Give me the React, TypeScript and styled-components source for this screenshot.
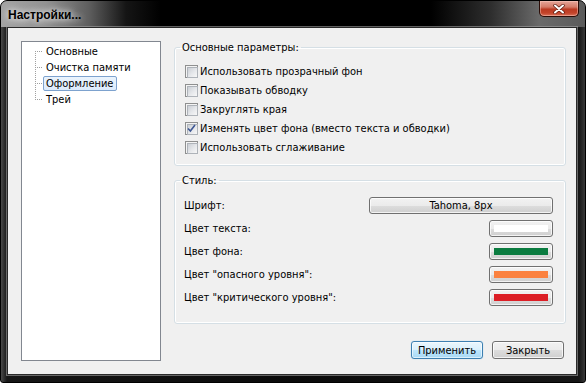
import React from "react";
import styled, { createGlobalStyle, css } from "styled-components";

const GlobalStyle = createGlobalStyle`
  html, body { margin: 0; padding: 0; background: #ffffff; }
  body {
    font-family: "DejaVu Sans Condensed", "DejaVu Sans", sans-serif;
    font-size: 11px;
    color: #000;
  }
  * { box-sizing: border-box; }
`;

const Window = styled.div`
  width: 586px;
  height: 383px;
  display: flex;
  flex-direction: column;
  border: 1px solid #000;
  border-radius: 7px 7px 3px 3px;
  overflow: hidden;
  background: linear-gradient(90deg, #4a4a4a 0px, #161616 6px, #0a0a0a 50%, #161616 578px, #444 586px);
`;

const TitleBar = styled.div`
  height: 26px;
  flex: none;
  display: flex;
  align-items: flex-start;
  padding-left: 7px;
  background:
    linear-gradient(90deg, #a4a4a4 0px, #929292 45px, #5e5e5e 88px, #151515 125px, #000 160px, #000 430px, #2e2e2e 490px, #6a6a6a 538px, #5a5a5a 586px);
`;

const Title = styled.div`
  margin-top: 7px;
  font-family: "Liberation Sans", Arial, sans-serif;
  font-weight: bold;
  font-size: 12px;
  line-height: 14px;
  color: #000;
  text-shadow: 0 0 6px rgba(255, 255, 255, 0.9), 0 0 10px rgba(255, 255, 255, 0.6);
`;

const CloseButton = styled.div`
  margin-left: auto;
  margin-right: 6px;
  width: 40px;
  height: 16px;
  border: 1px solid #2b0c06;
  border-top: none;
  border-radius: 0 0 5px 5px;
  display: flex;
  align-items: center;
  justify-content: center;
  background: linear-gradient(180deg, #e6a69a 0%, #d47b68 40%, #bb3a22 55%, #c4442a 80%, #d8715a 100%);
  box-shadow: inset 0 0 0 1px rgba(255, 210, 200, 0.45);
`;

const Client = styled.div`
  flex: 1;
  margin: 0 8px 7px 6px;
  border: 1px solid #2a2a2a;
  box-shadow: 0 0 0 1px rgba(160, 160, 160, 0.6);
  background: #f0f0f0;
  padding: 13px 10px 13px 13px;
  display: flex;
  gap: 13px;
`;

const Tree = styled.div`
  width: 140px;
  flex: none;
  background: #fff;
  border: 1px solid #828790;
  padding: 1px 0 0 0;
  display: flex;
  flex-direction: column;
`;

const TreeRow = styled.div`
  height: 16px;
  display: flex;
  align-items: center;
  padding-left: 13px;
`;

const TreeLabel = styled.span<{ $selected?: boolean }>`
  height: 15px;
  line-height: 13px;
  padding: 0 3px 0 2px;
  border: 1px solid transparent;
  border-radius: 2px;
  white-space: nowrap;
  ${(p) =>
    p.$selected &&
    css`
      border-color: #7da2ce;
      background: linear-gradient(180deg, #ebf4fd 0%, #dcebfc 100%);
    `}
`;

const RightPane = styled.div`
  flex: 1;
  display: flex;
  flex-direction: column;
`;

const Group = styled.fieldset<{ $top?: number }>`
  margin: ${(p) => p.$top ?? 0}px 0 0 0;
  padding: 0;
  border: 1px solid #d5dfe5;
  border-radius: 3px;
  box-shadow: inset 0 0 0 1px #ffffff;
  min-width: 0;
`;

const Legend = styled.legend`
  margin-left: 5px;
  padding: 0 2px;
  line-height: 13px;
`;

const CheckList = styled.div`
  padding: 8px 10px 8px 10px;
  display: flex;
  flex-direction: column;
`;

const CheckRow = styled.label`
  height: 19px;
  display: flex;
  align-items: center;
  gap: 2px;
  white-space: nowrap;
`;

const Box = styled.span`
  width: 13px;
  height: 13px;
  flex: none;
  border: 1px solid #8e8f8f;
  background: #f4f4f4;
  position: relative;
  display: flex;
  align-items: center;
  justify-content: center;
  &::before {
    content: "";
    position: absolute;
    left: 1px;
    top: 1px;
    width: 9px;
    height: 9px;
    border: 1px solid #aeb3b9;
    background: linear-gradient(135deg, #cbcfd5 0%, #e6e8eb 55%, #f7f7f7 100%);
  }
  svg { position: relative; }
`;

const StyleGrid = styled.div`
  padding: 7px 12px 14px 9px;
  display: grid;
  grid-template-columns: 1fr auto;
  grid-auto-rows: 23px;
  align-items: center;
`;

const RowLabel = styled.span`
  white-space: nowrap;
`;

const buttonBase = css`
  font-family: inherit;
  font-size: 11px;
  color: #000;
  border: 1px solid #707070;
  border-radius: 3px;
  background: linear-gradient(180deg, #f2f2f2 0%, #ebebeb 50%, #dddddd 51%, #cfcfcf 100%);
  box-shadow: inset 0 0 0 1px rgba(255, 255, 255, 0.75);
  display: flex;
  align-items: center;
  justify-content: center;
  padding: 0;
`;

const FontButton = styled.button`
  ${buttonBase};
  width: 184px;
  height: 17px;
  justify-self: end;
`;

const ColorButton = styled.button`
  ${buttonBase};
  width: 64px;
  height: 17px;
  justify-self: end;
`;

const Swatch = styled.span<{ $color: string }>`
  width: 54px;
  height: 7px;
  background: ${(p) => p.$color};
`;

const ButtonRow = styled.div`
  margin-top: auto;
  margin-bottom: 2px;
  display: flex;
  justify-content: flex-end;
  gap: 9px;
  padding-right: 2px;
`;

const DialogButton = styled.button<{ $default?: boolean }>`
  ${buttonBase};
  width: 72px;
  height: 18px;
  ${(p) =>
    p.$default &&
    css`
      border-color: #3c7fb1;
      background: linear-gradient(180deg, #eaf6fd 0%, #d9f0fc 50%, #bee6fd 51%, #a7d9f5 100%);
      box-shadow: inset 0 0 0 1px rgba(255, 255, 255, 0.6), 0 0 1px #8ac6ea;
    `}
`;

const Connector: React.FC<{ kind: "first" | "mid" | "last" }> = ({ kind }) => {
  const y1 = kind === "first" ? 8 : 0;
  const y2 = kind === "last" ? 8 : 16;
  const dots: React.ReactNode[] = [];
  for (let y = y1; y <= y2; y += 2) dots.push(<rect key={"v" + y} x={0} y={y} width={1} height={1} />);
  for (let x = 2; x <= 6; x += 2) dots.push(<rect key={"h" + x} x={x} y={8} width={1} height={1} />);
  return (
    <svg width={8} height={16} viewBox="0 0 8 16" fill="#a0a0a0" shapeRendering="crispEdges" style={{ flex: "none" }}>
      {dots}
    </svg>
  );
};

const Check = () => (
  <svg width="9" height="9" viewBox="0 0 9 9">
    <path d="M1 4.5 L3.4 7 L8 1" fill="none" stroke="#3f5894" strokeWidth="1.6" />
  </svg>
);

const treeItems = ["Основные", "Очистка памяти", "Оформление", "Трей"];

const checks: [string, boolean][] = [
  ["Использовать прозрачный фон", false],
  ["Показывать обводку", false],
  ["Закруглять края", false],
  ["Изменять цвет фона (вместо текста и обводки)", true],
  ["Использовать сглаживание", false],
];

const colors: [string, string][] = [
  ["Цвет текста:", "#ffffff"],
  ["Цвет фона:", "#0b7c40"],
  ["Цвет \"опасного уровня\":", "#fb8240"],
  ["Цвет \"критического уровня\":", "#dc1f26"],
];

export default function App() {
  return (
    <>
      <GlobalStyle />
      <Window>
        <TitleBar>
          <Title>Настройки...</Title>
          <CloseButton>
            <svg width="12" height="10" viewBox="0 0 12 10">
              <path d="M2 1.5 L10 8.5 M10 1.5 L2 8.5" stroke="#5a1a10" strokeWidth="3.4" strokeLinecap="round" />
              <path d="M2 1.5 L10 8.5 M10 1.5 L2 8.5" stroke="#ffffff" strokeWidth="2" strokeLinecap="round" />
            </svg>
          </CloseButton>
        </TitleBar>
        <Client>
          <Tree>
            {treeItems.map((t, i) => (
              <TreeRow key={t}>
                <Connector kind={i === 0 ? "first" : i === treeItems.length - 1 ? "last" : "mid"} />
                <TreeLabel $selected={i === 2}>{t}</TreeLabel>
              </TreeRow>
            ))}
          </Tree>
          <RightPane>
            <Group>
              <Legend>Основные параметры:</Legend>
              <CheckList>
                {checks.map(([label, on]) => (
                  <CheckRow key={label}>
                    <Box>{on && <Check />}</Box>
                    {label}
                  </CheckRow>
                ))}
              </CheckList>
            </Group>
            <Group $top={8}>
              <Legend>Стиль:</Legend>
              <StyleGrid>
                <RowLabel>Шрифт:</RowLabel>
                <FontButton>Tahoma, 8px</FontButton>
                {colors.map(([label, c]) => (
                  <React.Fragment key={label}>
                    <RowLabel>{label}</RowLabel>
                    <ColorButton>
                      <Swatch $color={c} />
                    </ColorButton>
                  </React.Fragment>
                ))}
              </StyleGrid>
            </Group>
            <ButtonRow>
              <DialogButton $default>Применить</DialogButton>
              <DialogButton>Закрыть</DialogButton>
            </ButtonRow>
          </RightPane>
        </Client>
      </Window>
    </>
  );
}
